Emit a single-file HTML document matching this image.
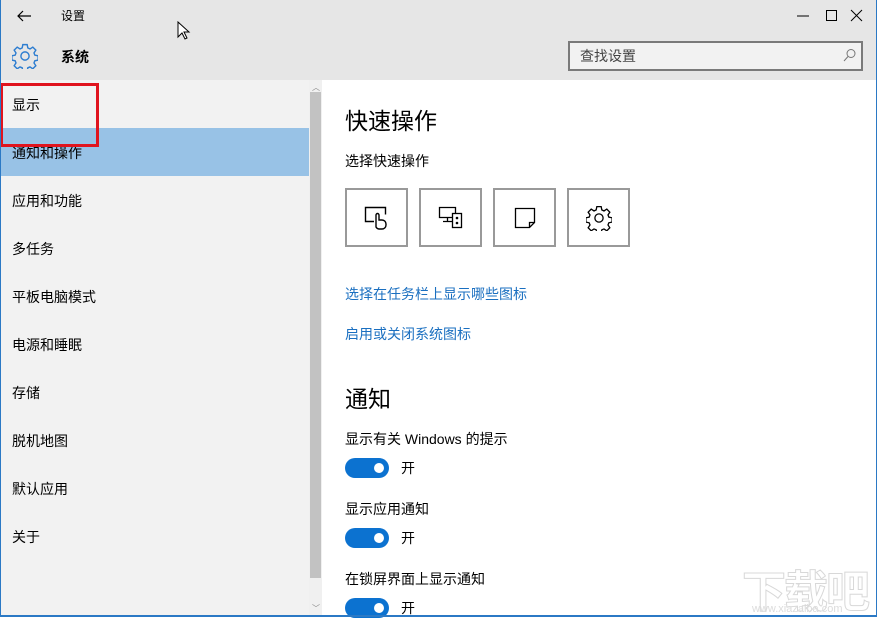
<!DOCTYPE html>
<html><head><meta charset="utf-8"><style>
*{margin:0;padding:0;box-sizing:border-box}
body{width:877px;height:617px;overflow:hidden;background:#fff;font-family:"Liberation Sans","Microsoft YaHei","Noto Sans CJK SC",sans-serif;position:relative;color:#000}
.a{position:absolute}
.hdr{left:0;top:0;width:877px;height:80px;background:#e6e6e6}
.side{left:0;top:80px;width:309px;height:537px;background:#f2f2f2}
.nav{position:absolute;left:12px;font-size:14px;color:#000}
.sel{left:0;top:128px;width:309px;height:48px;background:#98c2e6}
.sb{left:309px;top:80px;width:13px;height:537px;background:#f0f0f0}
.thumb{left:310px;top:92px;width:11px;height:486px;background:#c2c2c2}
.h{font-size:23px;color:#000}
.t{font-size:14px;color:#000}
.lnk{font-size:14px;color:#1a6fc0}
.qb{top:188px;width:63px;height:59px;border:2px solid #999;background:#fff}
.tg{left:345px;width:44px;height:20px;border-radius:10px;background:#0c72d0}
.tg::after{content:"";position:absolute;right:5px;top:5px;width:10px;height:10px;border-radius:5px;background:#fff}
.on{left:401px;font-size:14px}
</style></head><body>
<div class="a hdr"></div>
<div class="a side"></div>
<div class="a sel"></div>
<div class="a sb"></div>
<div class="a thumb"></div>
<div class="a" style="left:312px;top:82px;font-size:8px;color:#888">︿</div>
<div class="a" style="left:312px;top:603px;font-size:8px;color:#888">﹀</div>
<svg class="a" style="left:16px;top:9px" width="16" height="14"><path d="M15 7H2M7 2L2 7l5 5" fill="none" stroke="#000" stroke-width="1.2"/></svg>
<div class="a" style="left:61px;top:7px;font-size:12px">设置</div>
<svg class="a" style="left:177px;top:21px" width="14" height="20"><path d="M1 1v15l4-4 3 6 2-1-3-6h5z" fill="#fff" stroke="#000"/></svg>
<svg class="a" style="left:796px;top:9px" width="70" height="14"><path d="M1 7h12" stroke="#000"/><rect x="30.5" y="1.5" width="10" height="10" fill="none" stroke="#000"/><path d="M55 1l11 11M66 1L55 12" stroke="#000"/></svg>
<svg class="a" style="left:12px;top:43px" width="26" height="26" viewBox="0 0 24 24"><path d="M10 1.5h4l.6 3 2 1 2.6-1.7 2.8 2.8-1.7 2.6.8 2 3 .6v4l-3 .6-.8 2 1.7 2.6-2.8 2.8-2.6-1.7-2 .8-.6 3h-4l-.6-3-2-.8-2.6 1.7-2.8-2.8 1.7-2.6-.8-2-3-.6v-4l3-.6.8-2L2 6.6l2.8-2.8 2.6 1.7 2-1z" fill="none" stroke="#2d7dd0" stroke-width="1.3"/><circle cx="12" cy="12" r="3.8" fill="none" stroke="#2d7dd0" stroke-width="1.3"/></svg>
<div class="a" style="left:61px;top:47px;font-size:14px;font-weight:bold">系统</div>
<div class="a" style="left:568px;top:41px;width:295px;height:30px;border:2px solid #7a7a7a;background:#f2f2f2"></div>
<div class="a" style="left:580px;top:46px;font-size:14px;color:#444">查找设置</div>
<svg class="a" style="left:843px;top:48px" width="14" height="14"><circle cx="8" cy="5.5" r="4" fill="none" stroke="#777"/><path d="M5 8.5L1 13" stroke="#777"/></svg>
<div class="nav" style="top:95px">显示</div>
<div class="nav" style="top:143px">通知和操作</div>
<div class="nav" style="top:191px">应用和功能</div>
<div class="nav" style="top:239px">多任务</div>
<div class="nav" style="top:287px">平板电脑模式</div>
<div class="nav" style="top:335px">电源和睡眠</div>
<div class="nav" style="top:383px">存储</div>
<div class="nav" style="top:431px">脱机地图</div>
<div class="nav" style="top:479px">默认应用</div>
<div class="nav" style="top:527px">关于</div>
<div class="a" style="left:0;top:83px;width:99px;height:64px;border:3px solid #e0141e"></div>
<div class="a h" style="left:345px;top:102px">快速操作</div>
<div class="a t" style="left:345px;top:151px">选择快速操作</div>
<div class="a qb" style="left:345px"></div><div class="a qb" style="left:419px"></div><div class="a qb" style="left:493px"></div><div class="a qb" style="left:567px"></div>
<svg class="a" style="left:364px;top:206px" width="28" height="24"><path d="M10 15.5H1.5v-14h20v7" fill="none" stroke="#000" stroke-width="1.4"/><path d="M12 21v-12a1.5 1.5 0 013 0v5h3a4 4 0 014 4v1a4 4 0 01-4 4h-3a4 4 0 01-3-2z" fill="#fff" stroke="#000" stroke-width="1.4"/></svg>
<svg class="a" style="left:438px;top:206px" width="28" height="24"><path d="M1.5 1.5h16v10h-16zM9.5 11.5v4M5 15.5h9" fill="none" stroke="#000" stroke-width="1.3"/><rect x="14.5" y="7.5" width="9" height="14" fill="#fff" stroke="#000" stroke-width="1.3"/><circle cx="19" cy="12" r="1.3"/><circle cx="19" cy="17" r="1.3"/></svg>
<svg class="a" style="left:514px;top:207px" width="22" height="24"><path d="M1.5 1.5h19v14l-5 5h-14z M15.5 20.5v-5h5" fill="none" stroke="#000" stroke-width="1.3"/></svg>
<svg class="a" style="left:586px;top:205px" width="26" height="26" viewBox="0 0 24 24"><path d="M10 1.5h4l.6 3 2 1 2.6-1.7 2.8 2.8-1.7 2.6.8 2 3 .6v4l-3 .6-.8 2 1.7 2.6-2.8 2.8-2.6-1.7-2 .8-.6 3h-4l-.6-3-2-.8-2.6 1.7-2.8-2.8 1.7-2.6-.8-2-3-.6v-4l3-.6.8-2L2 6.6l2.8-2.8 2.6 1.7 2-1z" fill="none" stroke="#000" stroke-width="1.2"/><circle cx="12" cy="12" r="3.8" fill="none" stroke="#000" stroke-width="1.2"/></svg>
<div class="a lnk" style="left:345px;top:284px">选择在任务栏上显示哪些图标</div>
<div class="a lnk" style="left:345px;top:324px">启用或关闭系统图标</div>
<div class="a h" style="left:345px;top:380px">通知</div>
<div class="a t" style="left:345px;top:429px">显示有关 Windows 的提示</div>
<div class="a tg" style="top:458px"></div><div class="a on" style="top:458px">开</div>
<div class="a t" style="left:345px;top:499px">显示应用通知</div>
<div class="a tg" style="top:528px"></div><div class="a on" style="top:528px">开</div>
<div class="a t" style="left:345px;top:569px">在锁屏界面上显示通知</div>
<div class="a tg" style="top:598px"></div><div class="a on" style="top:598px">开</div>
<div class="a" style="left:742px;top:556px;font-size:44px;color:#fff;-webkit-text-stroke:1px #d8d8d8;font-weight:bold;letter-spacing:-2px">下载吧</div>
<div class="a" style="left:752px;top:603px;font-size:11px;color:#dcdcdc">www.xiazaiba.com</div>
<div class="a" style="left:0;top:0;width:1px;height:617px;background:#2b79c5"></div>
<div class="a" style="left:876px;top:0;width:1px;height:617px;background:#2b79c5"></div>
<div class="a" style="left:0;top:615px;width:877px;height:2px;background:#2b79c5"></div>
</body></html>
